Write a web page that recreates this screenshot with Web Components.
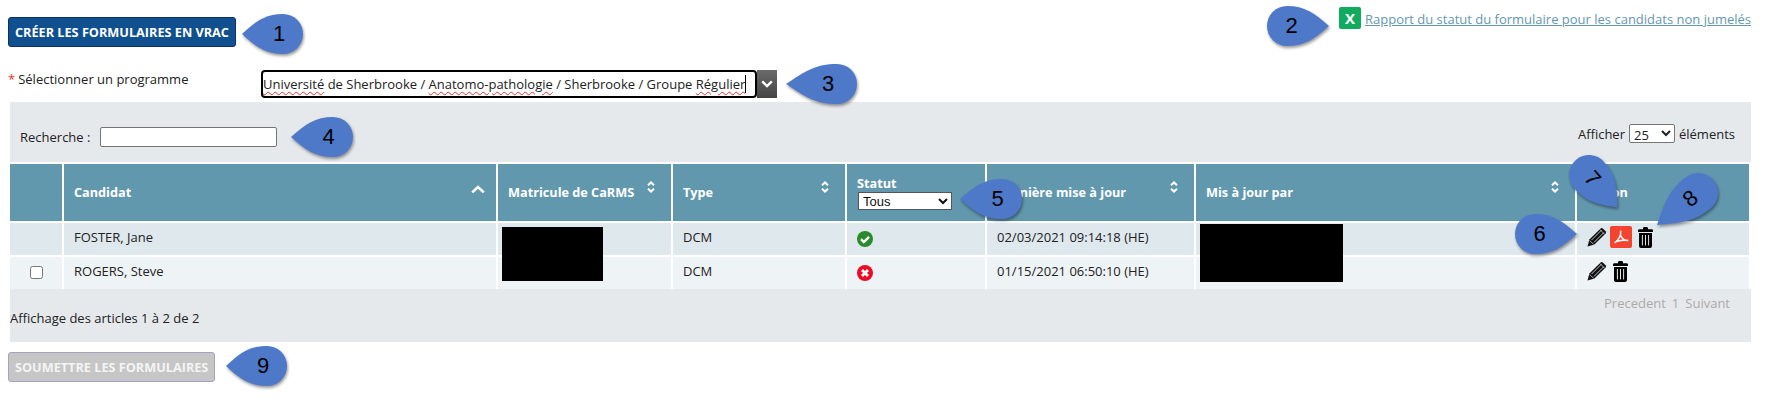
<!DOCTYPE html>
<html lang="fr">
<head>
<meta charset="utf-8">
<title>Formulaires</title>
<style>
  html, body { margin: 0; background: #fff; }
  body { font-family: "Open Sans", "Liberation Sans", sans-serif; font-size: 13px; color: #222; }
</style>
</head>
<body>
<app-page>
  <page-header>
    <action-button slot="action">CRÉER LES FORMULAIRES EN VRAC</action-button>
    <report-link slot="report">Rapport du statut du formulaire pour les candidats non jumelés</report-link>
  </page-header>
  <program-picker label="Sélectionner un programme"></program-picker>
  <data-panel>
    <candidates-table></candidates-table>
  </data-panel>
  <action-button disabled style="margin-top:10px">SOUMETTRE LES FORMULAIRES</action-button>

  <redact-box slot="overlay" x="502" y="227" w="101" h="54"></redact-box>
  <redact-box slot="overlay" x="1200" y="224" w="143" h="58"></redact-box>

  <map-pin slot="overlay" cx="283" cy="34" angle="180" len="41">1</map-pin>
  <map-pin slot="overlay" cx="1287" cy="26" angle="0" len="42">2</map-pin>
  <map-pin slot="overlay" cx="837" cy="84" angle="180" len="51">3</map-pin>
  <map-pin slot="overlay" cx="333" cy="137" angle="180" len="42">4</map-pin>
  <map-pin slot="overlay" cx="1002" cy="199" angle="180" len="42">5</map-pin>
  <map-pin slot="overlay" cx="1535" cy="234" angle="0" len="42">6</map-pin>
  <map-pin slot="overlay" cx="1589" cy="175" angle="49" len="43" turn="49">7</map-pin>
  <map-pin slot="overlay" cx="1698" cy="193" angle="142" len="52" turn="-38">8</map-pin>
  <map-pin slot="overlay" cx="267" cy="366" angle="180" len="41">9</map-pin>
</app-page>

<script>
const ICONS = {
  sort: `<svg width="8" height="12" viewBox="0 0 8 12"><path d="M1 4.2 4 1.4l3 2.8M1 7.8l3 2.8 3-2.8" fill="none" stroke="#fff" stroke-width="2"/></svg>`,
  up: `<svg width="14" height="9" viewBox="0 0 14 9"><path d="M1.2 7.4 7 2l5.8 5.4" fill="none" stroke="#fff" stroke-width="2.6"/></svg>`,
  ok: `<svg width="16" height="16" viewBox="0 0 16 16"><circle cx="8" cy="8" r="8" fill="#2a8b2a"/><path d="M4 8.2l2.8 2.8L12 5.8" fill="none" stroke="#fff" stroke-width="2.4"/></svg>`,
  ko: `<svg width="16" height="16" viewBox="0 0 16 16"><circle cx="8" cy="8" r="8" fill="#ea0d26"/><path d="M5 5l6 6M11 5l-6 6" fill="none" stroke="#fff" stroke-width="2.8"/></svg>`,
  pencil: `<svg width="20" height="20" viewBox="0 0 20 20"><path d="M.5 19.5 2.4 12.6 13.6 1.4a1.6 1.6 0 0 1 2.2 0l2.8 2.8a1.6 1.6 0 0 1 0 2.2L7.4 17.6Z" fill="#111"/><path d="M4.6 13 14.4 3.2M7 15.4l9.8-9.8" stroke="#e4eaee" stroke-width=".8"/><path d="M12.8 2.4l4.8 4.8" stroke="#e4eaee" stroke-width=".7"/><path d="M2.6 13.4l4 4" stroke="#e4eaee" stroke-width=".7"/></svg>`,
  pdf: `<svg width="22" height="22" viewBox="0 0 22 22"><rect width="22" height="22" rx="2" fill="#f44331"/><path d="M10.6 4.6c.5 3.4-1.4 8.6-6 12.4M10.8 9.4c1 3 3.4 5 7.4 5.2-3-.6-7.6-.4-11.6 1" fill="none" stroke="#fff" stroke-width="1.5"/></svg>`,
  trash: `<svg width="15" height="21" viewBox="0 0 15 21"><path d="M5 2.2V1.4C5 .6 5.6 0 6.4 0h2.2c.8 0 1.4.6 1.4 1.4v.8h3.6c.8 0 1.4.6 1.4 1.4V5H0V3.6c0-.8.6-1.4 1.4-1.4Z" fill="#000"/><path d="M1 6h13v13c0 1.1-.9 2-2 2H3c-1.1 0-2-.9-2-2Z" fill="#000"/><path d="M4.4 8v10.4M7.5 8v10.4M10.6 8v10.4" stroke="#dfe6ea" stroke-width="1"/></svg>`
};

class AppPage extends HTMLElement {
  constructor() {
    super();
    this.attachShadow({ mode: 'open' });
    this.shadowRoot.innerHTML = `
      <style>
        :host { display: block; position: relative; width: 1765px; height: 403px; overflow: hidden; }
      </style>
      <slot></slot>
      <slot name="overlay"></slot>
    `;
  }
}

class PageHeader extends HTMLElement {
  constructor() {
    super();
    this.attachShadow({ mode: 'open' });
    this.shadowRoot.innerHTML = `
      <style>
        :host { display: flex; justify-content: space-between; align-items: flex-start; height: 47px; padding: 0 14px 0 8px; }
        .action { display: block; margin-top: 17px; }
        .report { display: block; margin-top: 7px; }
      </style>
      <div class="action"><slot name="action"></slot></div>
      <div class="report"><slot name="report"></slot></div>
    `;
  }
}

class ActionButton extends HTMLElement {
  constructor() {
    super();
    this.attachShadow({ mode: 'open' });
    this.shadowRoot.innerHTML = `
      <style>
        :host {
          display: block;
          width: max-content;
          margin-left: 8px;
          box-sizing: border-box;
          height: 30px;
          padding: 0 6px;
          font: 700 12.7px/28px "Open Sans", "Liberation Sans", sans-serif;
          color: #fff;
          background: #10508f;
          border: 1px solid #0b2f6b;
          border-radius: 3px;
        }
        :host([disabled]) { background: #c6c6c6; border-color: #a5a3c4; color: #f4f4f4; }
      </style>
      <slot></slot>
    `;
  }
  connectedCallback() {
    // the header already gives this one its left edge
    if (this.slot === 'action') this.style.marginLeft = '0';
  }
}

class ReportLink extends HTMLElement {
  constructor() {
    super();
    this.attachShadow({ mode: 'open' });
    this.shadowRoot.innerHTML = `
      <style>
        :host { display: flex; align-items: flex-start; gap: 4px; }
        .xls {
          width: 22px; height: 22px; border-radius: 2px; background: #10ab5e; color: #fff;
          font: 700 15px/22px "Open Sans", sans-serif; text-align: center;
        }
        a { color: #6498ae; text-decoration: underline; font-size: 13px; line-height: 24px; }
      </style>
      <span class="xls">X</span>
      <a href="#"><slot></slot></a>
    `;
  }
}

class ProgramPicker extends HTMLElement {
  constructor() {
    super();
    this.attachShadow({ mode: 'open' });
  }
  connectedCallback() {
    this.shadowRoot.innerHTML = `
      <style>
        :host { display: flex; align-items: flex-start; margin-top: 23px; padding-left: 8px; height: 28px; }
        label { width: 253px; flex: none; line-height: 18px; color: #222; }
        label i { color: #e8312a; font-style: normal; margin-right: 3px; }
        .field {
          box-sizing: border-box; width: 496px; height: 28px; border: 2px solid #000; border-radius: 4px;
          padding-left: 0; font-size: 13px; line-height: 24px; color: #222; white-space: nowrap;
        }
        .err { text-decoration: underline wavy #e8312a 1px; text-underline-offset: 2px; }
        .caret { display: inline-block; width: 1px; height: 18px; background: #000; vertical-align: -4px; }
        .drop {
          width: 20px; height: 28px; background: linear-gradient(#6a6a6a, #444);
          display: flex; align-items: center; justify-content: center;
        }
      </style>
      <label><i>*</i>${this.getAttribute('label')}</label>
      <div class="field"><span class="err">Université</span> de Sherbrooke / <span class="err">Anatomo-pathologie</span> / Sherbrooke / Groupe <span class="err">Régulier</span><span class="caret"></span></div>
      <div class="drop"><svg width="12" height="8" viewBox="0 0 12 8"><path d="M1.2 1.4 6 6l4.8-4.6" fill="none" stroke="#fff" stroke-width="2.4"/></svg></div>
    `;
  }
}

class DataPanel extends HTMLElement {
  constructor() {
    super();
    this.attachShadow({ mode: 'open' });
    this.shadowRoot.innerHTML = `
      <style>
        :host { display: block; margin: 4px 0 0 10px; width: 1741px; height: 240px; background: #e6e9ec; }
        .tools { display: flex; justify-content: space-between; align-items: flex-start; height: 60px; padding: 0 16px 0 10px; box-sizing: border-box; }
        .search { display: flex; align-items: center; gap: 10px; margin-top: 25px; height: 20px; }
        .search input {
          box-sizing: border-box; width: 177px; height: 20px; background: #fff; border: 1px solid #767676;
          border-radius: 2px; padding: 0 2px; margin: 0;
        }
        .count { display: flex; align-items: center; gap: 4px; margin-top: 22px; height: 19px; }
        .count select {
          width: 46px; height: 19px; margin: 0; padding: 0; background: #fff; border: 1px solid #767676;
          border-radius: 2px; font: 13px "Open Sans", sans-serif; color: #222;
        }
        .foot { display: flex; justify-content: space-between; align-items: flex-start; height: 53px; padding-right: 21px; }
        .info { margin-top: 20px; line-height: 18px; }
        .pages { display: flex; gap: 6px; margin-top: 5px; line-height: 18px; color: #a9a9a9; }
      </style>
      <div class="tools">
        <div class="search"><span>Recherche :</span><input type="text"></div>
        <div class="count"><span>Afficher</span><select><option>25</option><option>50</option></select><span>éléments</span></div>
      </div>
      <slot></slot>
      <div class="foot">
        <div class="info">Affichage des articles 1 à 2 de 2</div>
        <div class="pages"><span>Precedent</span><span>1</span><span>Suivant</span></div>
      </div>
    `;
  }
}

class CandidatesTable extends HTMLElement {
  constructor() {
    super();
    this.attachShadow({ mode: 'open' });
    this.rows = [
      { pick: false, name: 'FOSTER, Jane', type: 'DCM', status: 'ok', date: '02/03/2021 09:14:18 (HE)', pdf: true },
      { pick: true, name: 'ROGERS, Steve', type: 'DCM', status: 'ko', date: '01/15/2021 06:50:10 (HE)', pdf: false }
    ];
  }

  connectedCallback() {
    const head = (text, icon, cls = '') => `<div class="head"><span>${text}</span><span class="sort ${cls}">${icon}</span></div>`;
    const body = this.rows.map(r => `
      <tr>
        <td class="pick">${r.pick ? '<input type="checkbox">' : ''}</td>
        <td>${r.name}</td>
        <td></td>
        <td>${r.type}</td>
        <td><span class="ic">${ICONS[r.status]}</span></td>
        <td>${r.date}</td>
        <td></td>
        <td><div class="acts">${ICONS.pencil}${r.pdf ? ICONS.pdf : ''}${ICONS.trash}</div></td>
      </tr>`).join('');

    this.shadowRoot.innerHTML = `
      <style>
        :host { display: block; }
        table { width: 1741px; table-layout: fixed; border-collapse: separate; border-spacing: 0; }
        th, td { border-top: 2px solid #fff; border-right: 2px solid #fff; padding: 0 0 0 10px; text-align: left; vertical-align: middle; }
        th { height: 55px; padding-bottom: 2px; background: #6298ae; color: #fff; font-size: 12.7px; font-weight: 700; padding-right: 16px; }
        td { height: 28px; padding-bottom: 4px; background: #dee8ed; color: #222; }
        tr:nth-child(2) td { background: #eef3f6; }
        .head { display: flex; justify-content: space-between; align-items: center; }
        .sort { display: block; height: 12px; margin-top: -10px; }
        .sort.up { height: 9px; margin-top: -5px; }
        .sort svg { display: block; }
        td.pick { padding-left: 0; }
        .pick input { display: block; margin: 3px 0 0 20px; width: 13px; height: 13px; }
        .ic { display: block; height: 16px; margin-top: 3px; }
        .ic svg { display: block; }
        .acts { display: flex; align-items: center; gap: 3px; }
        .acts svg { display: block; flex: none; }
        .acts svg:last-child { margin-left: 3px; }
        .status { display: block; padding-top: 2px; }
        .status span { display: block; line-height: 14px; }
        .status select {
          display: block; width: 94px; height: 18px; margin: 2px 0 0 1px; padding: 0; background: #fff; border: 1px solid #555;
          font: 13px "Liberation Sans", sans-serif; color: #111;
        }
      </style>
      <table>
        <colgroup>
          <col style="width:54px"><col style="width:434px"><col style="width:175px"><col style="width:174px">
          <col style="width:140px"><col style="width:209px"><col style="width:381px"><col style="width:174px">
        </colgroup>
        <thead>
          <tr>
            <th></th>
            <th style="padding-right:11px">${head('Candidat', ICONS.up, 'up')}</th>
            <th>${head('Matricule de CaRMS', ICONS.sort)}</th>
            <th>${head('Type', ICONS.sort)}</th>
            <th><div class="status"><span>Statut</span><select><option>Tous</option></select></div></th>
            <th>${head('Dernière mise à jour', ICONS.sort)}</th>
            <th>${head('Mis à jour par', ICONS.sort)}</th>
            <th>Action</th>
          </tr>
        </thead>
        <tbody>${body}</tbody>
      </table>
    `;
  }
}

// black box hiding personal data in the source image
class RedactBox extends HTMLElement {
  constructor() {
    super();
    this.attachShadow({ mode: 'open' });
  }
  connectedCallback() {
    const a = n => this.getAttribute(n);
    this.shadowRoot.innerHTML = `
      <style>
        :host { display: block; position: absolute; left: ${a('x')}px; top: ${a('y')}px; width: ${a('w')}px; height: ${a('h')}px; background: #000; }
      </style>
    `;
  }
}

// numbered callout, drawn around its circle centre
class MapPin extends HTMLElement {
  constructor() {
    super();
    this.attachShadow({ mode: 'open' });
  }
  connectedCallback() {
    const cx = this.getAttribute('cx');
    const cy = this.getAttribute('cy');
    const angle = Number(this.getAttribute('angle') || 0);
    const len = Number(this.getAttribute('len') || 41);
    const turn = this.getAttribute('turn') || 0;
    const mid = len * 0.42;
    // the digit sits a little towards the tip, longer pins push it further
    const shift = (len - 33) / 2;
    const dx = (shift * Math.cos(angle * Math.PI / 180)).toFixed(1);
    const dy = (shift * Math.sin(angle * Math.PI / 180)).toFixed(1);
    this.shadowRoot.innerHTML = `
      <style>
        :host { display: block; position: absolute; left: ${cx}px; top: ${cy}px; width: 0; height: 0; }
        svg { position: absolute; left: -70px; top: -70px; overflow: visible; filter: drop-shadow(1px 2px 1.5px rgba(0,0,0,.4)); }
        .n {
          position: absolute; left: -20px; top: -20px; width: 40px; height: 40px; text-align: center;
          font: 22px/40px "Liberation Sans", sans-serif; color: #000; transform: translate(${dx}px, ${dy}px) rotate(${turn}deg);
        }
      </style>
      <svg width="140" height="140" viewBox="-70 -70 140 140">
        <path transform="rotate(${angle})" d="M${len} 0C${mid + 10} 13 ${mid} 20 0 20A20 20 0 1 1 0 -20C${mid} -20 ${mid + 10} -13 ${len} 0Z" fill="#4e79c9"/>
      </svg>
      <div class="n"><slot></slot></div>
    `;
  }
}

customElements.define('app-page', AppPage);
customElements.define('page-header', PageHeader);
customElements.define('action-button', ActionButton);
customElements.define('report-link', ReportLink);
customElements.define('program-picker', ProgramPicker);
customElements.define('data-panel', DataPanel);
customElements.define('candidates-table', CandidatesTable);
customElements.define('redact-box', RedactBox);
customElements.define('map-pin', MapPin);
</script>
</body>
</html>
